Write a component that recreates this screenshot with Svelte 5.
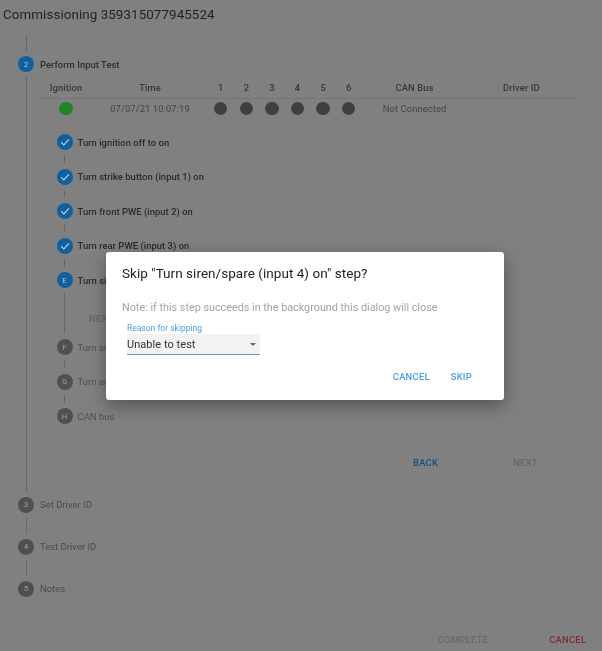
<script>
  const columns = [
    { label: 'Ignition', width: 52 },
    { label: 'Time', width: 116 },
    { label: '1', width: 25.6 },
    { label: '2', width: 25.6 },
    { label: '3', width: 25.6 },
    { label: '4', width: 25.6 },
    { label: '5', width: 25.6 },
    { label: '6', width: 25.6 },
    { label: 'CAN Bus', width: 106 },
    { label: 'Driver ID', width: 107.6 }
  ];
  const gridTemplate = columns.map((c) => c.width + 'px').join(' ');
  const doneSteps = [
    'Turn ignition off to on',
    'Turn strike button (input 1) on',
    'Turn front PWE (input 2) on',
    'Turn rear PWE (input 3) on'
  ];
  const laterSteps = [
    ['F', 'Turn aux 1 (input 5) on'],
    ['G', 'Turn aux 2 (input 6) on'],
    ['H', 'CAN bus']
  ];
  const outerSteps = [
    ['3', 'Set Driver ID'],
    ['4', 'Test Driver ID'],
    ['5', 'Notes']
  ];
</script>

<div class="page">
  <h1 class="title">Commissioning 359315077945524</h1>

  <div class="stepper">
    <div class="line top-line"></div>
    <div class="step">
      <span class="dot blue">2</span>
      <span class="step-label active">Perform Input Test</span>
    </div>

    <div class="step-body">
      <div class="table">
        <div class="row head" style:grid-template-columns={gridTemplate}>
          {#each columns as c}<span>{c.label}</span>{/each}
        </div>
        <div class="row cells" style:grid-template-columns={gridTemplate}>
          <span><i class="led green"></i></span>
          <span>07/07/21 10:07:19</span>
          {#each [1, 2, 3, 4, 5, 6] as n (n)}<span><i class="led"></i></span>{/each}
          <span>Not Connected</span>
          <span></span>
        </div>
      </div>

      <div class="substeps">
        {#each doneSteps as label}
          <div class="step">
            <span class="dot blue">
              <svg viewBox="0 0 16 16" width="16" height="16" aria-hidden="true">
                <path d="M4.2 8.3 L6.9 10.9 L11.9 5.4" fill="none" stroke="#c4d3e0" stroke-width="1.1" />
              </svg>
            </span>
            <span class="sub-label strong">{label}</span>
          </div>
          <div class="line sub-line"></div>
        {/each}

        <div class="step">
          <span class="dot blue small-text">E</span>
          <span class="sub-label strong">Turn siren/spare (input 4) on</span>
        </div>
        <div class="sub-body">
          <span class="btn disabled">NEXT</span>
        </div>

        {#each laterSteps as [letter, label], i}
          <div class="step">
            <span class="dot grey small-text">{letter}</span>
            <span class="sub-label">{label}</span>
          </div>
          {#if i < laterSteps.length - 1}<div class="line sub-line"></div>{/if}
        {/each}
      </div>

      <div class="step-actions">
        <span class="btn back">BACK</span>
        <span class="btn disabled">NEXT</span>
      </div>
    </div>

    {#each outerSteps as [num, label], i}
      <div class="step">
        <span class="dot grey">{num}</span>
        <span class="step-label">{label}</span>
      </div>
      {#if i < outerSteps.length - 1}<div class="line outer-line"></div>{/if}
    {/each}
  </div>

  <div class="footer">
    <span class="btn disabled">COMPLETE</span>
    <span class="btn danger">CANCEL</span>
  </div>
</div>

<div class="dialog" role="dialog">
  <h2>Skip "Turn siren/spare (input 4) on" step?</h2>
  <p class="note">Note: if this step succeeds in the background this dialog will close</p>
  <div class="field">
    <span class="field-label">Reason for skipping</span>
    <div class="select">
      <span>Unable to test</span>
      <i class="caret"></i>
    </div>
  </div>
  <div class="dialog-actions">
    <span class="btn primary">CANCEL</span>
    <span class="btn primary">SKIP</span>
  </div>
</div>

<style>
  :global(body) {
    margin: 0;
    background: #808080;
    font-family: Roboto, "Liberation Sans", sans-serif;
  }
  .page {
    height: 651px;
    box-sizing: border-box;
    display: flex;
    flex-direction: column;
    position: relative;
    overflow: hidden;
    filter: blur(0.35px);
  }
  .title {
    margin: 0;
    padding: 6px 0 0 3px;
    height: 29px;
    box-sizing: border-box;
    font-size: 13.4px;
    line-height: 18px;
    font-weight: 400;
    letter-spacing: 0.07px;
    color: #222;
  }
  .stepper {
    padding-left: 18px;
    display: flex;
    flex-direction: column;
  }
  .line {
    width: 1px;
    background: #666;
    margin-left: 8px;
  }
  .top-line { height: 16px; margin-top: 6px; margin-bottom: 5px; }
  .outer-line { height: 16px; margin-top: 5px; margin-bottom: 5px; background: #6a6a6a; }
  .sub-line { height: 8px; margin: 5px 0 5.5px 7.5px; background: #6a6a6a; }
  .step {
    display: flex;
    align-items: center;
    height: 16px;
  }
  .dot {
    width: 16px;
    height: 16px;
    flex: none;
    border-radius: 50%;
    display: flex;
    align-items: center;
    justify-content: center;
    font-size: 8px;
    color: #b4c4d2;
    margin-right: 6px;
  }
  .dot.blue { background: #10609f; }
  .dot.grey { background: #505050; color: #a0a0a0; }
  .step-label {
    font-size: 9.4px;
    color: #4a4a4a;
    letter-spacing: 0.05px;
  }
  .step-label.active { font-weight: 500; color: #2e2e2e; }
  .step-body {
    margin: 5px 0 5px 8px;
    border-left: 1px solid #666;
    padding-left: 13px;
    height: 414.5px;
    box-sizing: border-box;
    display: flex;
    flex-direction: column;
  }
  .table { width: 535px; }
  .row {
    display: grid;
    justify-items: center;
    align-items: center;
    font-size: 9.4px;
  }
  .head {
    height: 22px;
    box-sizing: border-box;
    font-weight: 500;
    color: #383838;
    border-bottom: 1px solid #747474;
    letter-spacing: 0.1px;
  }
  .cells {
    height: 19px;
    color: #444;
    letter-spacing: 0.1px;
  }
  .led {
    display: block;
    width: 13.4px;
    height: 13.4px;
    border-radius: 50%;
    background: #3f3f3f;
  }
  .led.green { background: #218525; }
  .substeps {
    display: flex;
    flex-direction: column;
    margin: 16px 0 0 16.5px;
  }
  .substeps .dot { margin-right: 5px; }
  .small-text { font-size: 7.5px; }
  .sub-label { font-size: 9.4px; color: #505050; letter-spacing: 0.05px; }
  .sub-label.strong { font-weight: 500; color: #2a2a2a; }
  .sub-body {
    margin: 5px 0 5px 7.5px;
    border-left: 1px solid #6a6a6a;
    height: 41px;
    box-sizing: border-box;
    padding: 18px 0 0 24px;
    line-height: 11px;
  }
  .step-actions {
    display: flex;
    margin-top: 33px;
    padding-left: 373px;
    gap: 75px;
  }
  .btn {
    font-size: 9.4px;
    font-weight: 500;
    letter-spacing: 0.25px;
    line-height: 11px;
  }
  .back { color: #15507f; }
  .disabled { color: #696969; }
  .danger { color: #7c2f2f; }
  .primary { color: #4aa0e4; }
  .footer {
    margin-top: auto;
    height: 17px;
    padding-left: 438px;
    display: flex;
    gap: 61px;
  }
  .dialog {
    position: absolute;
    left: 106px;
    top: 252px;
    width: 398px;
    height: 148px;
    box-sizing: border-box;
    padding: 12px 16px 0;
    background: #fff;
    border-radius: 3px;
    box-shadow: 0 6px 18px rgba(0, 0, 0, 0.35);
  }
  h2 {
    margin: 0;
    font-size: 13.5px;
    line-height: 18px;
    font-weight: 400;
    letter-spacing: 0.04px;
    color: #222;
    filter: blur(0.3px);
  }
  .note {
    margin: 19px 0 0;
    font-size: 10.8px;
    line-height: 14px;
    color: #a3a3a3;
    filter: blur(0.3px);
  }
  .field {
    margin: 8px 0 0 5px;
    width: 133px;
    filter: blur(0.25px);
  }
  .field-label {
    display: block;
    font-size: 8.5px;
    line-height: 11px;
    color: #4aa0e4;
  }
  .select {
    height: 21px;
    box-sizing: border-box;
    background: #f2f2f2;
    border-bottom: 1.5px solid #4aa0e4;
    display: flex;
    align-items: center;
    justify-content: space-between;
    font-size: 11px;
    letter-spacing: 0.05px;
    color: #333;
    padding-right: 4px;
  }
  .caret {
    width: 0;
    height: 0;
    border-left: 3.5px solid transparent;
    border-right: 3.5px solid transparent;
    border-top: 3.5px solid #666;
  }
  .dialog-actions {
    display: flex;
    justify-content: flex-end;
    gap: 21px;
    margin-top: 16px;
    padding-right: 16px;
    filter: blur(0.25px);
  }
</style>
